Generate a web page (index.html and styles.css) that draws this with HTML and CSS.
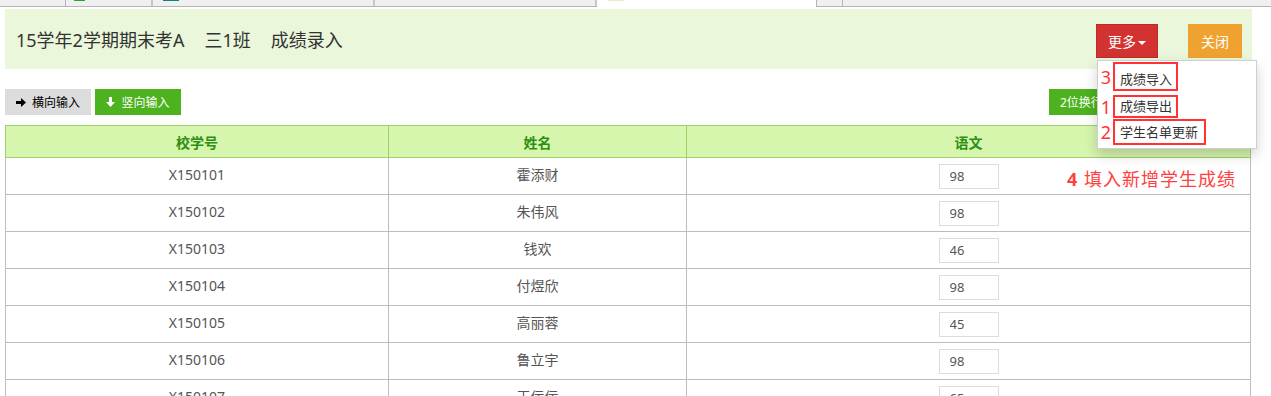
FILE: index.html
```html
<!DOCTYPE html>
<html lang="zh-CN">
<head>
    <meta charset="UTF-8">
    <title>成绩录入</title>
    <link rel="stylesheet" href="styles.css">
</head>
<body>
    <div class="tabs">
        <div class="tab tab-a"></div>
        <div class="tab tab-b"><i class="tab-icon icon-green"></i></div>
        <div class="tab tab-c"><i class="tab-icon icon-teal"></i></div>
        <div class="tab tab-d"></div>
        <div class="tab tab-e active"><i class="tab-icon icon-pale"></i></div>
        <div class="tab tab-f"></div>
    </div>

    <div class="page">
        <div class="header">
            <div class="title">15学年2学期期末考A<span class="gap">三1班</span><span class="gap">成绩录入</span></div>
            <div class="actions">
                <div class="more-wrap">
                    <button class="btn btn-more">更多<span class="caret"></span></button>
                    <ul class="menu">
                        <li class="menu-item"><span class="num">3</span><span class="mark mark-1">成绩导入</span></li>
                        <li class="menu-item item-2"><span class="num">1</span><span class="mark mark-2">成绩导出</span></li>
                        <li class="menu-item item-3"><span class="num">2</span><span class="mark mark-3">学生名单更新</span></li>
                    </ul>
                </div>
                <button class="btn btn-close">关闭</button>
            </div>
        </div>

        <div class="toolbar">
            <button class="tb-btn tb-gray">
                <svg width="10" height="9" viewBox="0 0 10 9"><path d="M0 3h5V0l5 4.5L5 9V6H0z" fill="#000"/></svg>
                横向输入
            </button>
            <button class="tb-btn tb-green">
                <svg width="9" height="10" viewBox="0 0 9 10"><path d="M3 0h3v5h3L4.5 10 0 5h3z" fill="#fff"/></svg>
                竖向输入
            </button>
            <div class="tb-right">
                <button class="tb-btn tb-green tb-wrap">2位换行</button>
                <button class="tb-btn tb-green tb-wrap tb-last">3位换行</button>
            </div>
        </div>

        <div class="table-wrap">
            <table class="scores">
                <thead>
                    <tr>
                        <th class="col-id">校学号</th>
                        <th class="col-name">姓名</th>
                        <th>语文</th>
                    </tr>
                </thead>
                <tbody>
                    <tr><td>X150101</td><td>霍添财</td><td><input class="score" value="98"></td></tr>
                    <tr><td>X150102</td><td>朱伟风</td><td><input class="score" value="98"></td></tr>
                    <tr><td>X150103</td><td>钱欢</td><td><input class="score" value="46"></td></tr>
                    <tr><td>X150104</td><td>付煜欣</td><td><input class="score" value="98"></td></tr>
                    <tr><td>X150105</td><td>高丽蓉</td><td><input class="score" value="45"></td></tr>
                    <tr><td>X150106</td><td>鲁立宇</td><td><input class="score" value="98"></td></tr>
                    <tr><td>X150107</td><td>王佞佞</td><td><input class="score" value="65"></td></tr>
                </tbody>
            </table>
            <div class="note"><b>4</b> 填入新增学生成绩</div>
        </div>
    </div>
</body>
</html>
```

FILE: styles.css
```css
html {
    overflow: hidden;
}
body {
    margin: 0;
    font-family: "Noto Sans", "Noto Sans CJK SC", sans-serif;
    color: #333;
    background: #fff;
}
.tabs {
    display: flex;
    height: 6px;
    background: #f0f0f0;
    border-bottom: 1px solid #b4b4b4;
}
.tab {
    height: 6px;
    border-right: 1px solid #b4b4b4;
    position: relative;
}
.tab-a { width: 65px; }
.tab-b { width: 85px; border-right: 2px solid #c8c8c8; }
.tab-c { width: 220px; border-right: 2px solid #c8c8c8; }
.tab-d { width: 220px; border-right: 2px solid #c8c8c8; }
.tab-e { width: 219px; }
.tab-f { width: 25px; }
.tab.active {
    background: #fff;
    height: 7px;
}
.tab-icon {
    display: block;
    height: 1px;
    width: 11px;
    margin-left: 8px;
}
.icon-green { background: #1aaa3a; }
.icon-teal { background: #108080; width: 16px; margin-left: 10px; }
.icon-pale { background: #e4f0c8; width: 16px; margin-left: 11px; }

.page {
    width: 1247px;
    margin: 0 5px;
    padding-top: 2px;
}
.header {
    height: 60px;
    background: #eaf7da;
    display: flex;
    align-items: center;
    justify-content: space-between;
    padding: 0 10px 0 11px;
}
.title {
    font-size: 18px;
    color: #333;
}
.gap {
    margin-left: 20px;
}
.actions {
    display: flex;
    gap: 30px;
    align-items: center;
    margin-top: 4px;
}
.btn {
    height: 34px;
    border: none;
    color: #fff;
    font-family: inherit;
    font-size: 14px;
    padding: 0;
}
.more-wrap {
    position: relative;
}
.btn-more {
    width: 62px;
    background: #d23330;
    border: 1px solid #b92c28;
}
.caret {
    display: inline-block;
    margin-left: 2px;
    vertical-align: middle;
    border-top: 4px solid #fff;
    border-left: 4px solid transparent;
    border-right: 4px solid transparent;
}
.btn-close {
    width: 54px;
    background: #efa22f;
}
.menu {
    position: absolute;
    top: 36px;
    left: 1px;
    width: 157px;
    margin: 0;
    padding: 1px 0 3px 1px;
    list-style: none;
    background: #fff;
    border: 1px solid #cfcfcf;
    box-shadow: 0 6px 12px rgba(0, 0, 0, 0.18);
    z-index: 5;
}
.menu-item {
    display: flex;
    align-items: center;
}
.item-2 { margin-top: 4px; }
.item-3 { margin-top: 1px; }
.num {
    width: 14px;
    text-align: center;
    color: #f33;
    font-size: 18px;
    line-height: 20px;
}
.mark {
    border: 2px solid #f33;
    font-size: 13px;
    line-height: 14px;
    color: #333;
}
.mark-1 { padding: 8px 4px 3px 5px; }
.mark-2 { padding: 2px 4px 3px 5px; }
.mark-3 { padding: 4px 6px 4px 5px; }

.toolbar {
    display: flex;
    gap: 4px;
    margin-top: 20px;
    height: 26px;
}
.tb-btn {
    width: 86px;
    height: 26px;
    border: none;
    font-family: inherit;
    font-size: 12px;
    display: flex;
    align-items: center;
    justify-content: center;
    gap: 6px;
    padding: 0;
}
.tb-gray {
    background: #dcdcdc;
    color: #000;
}
.tb-green {
    background: #4cb21d;
    color: #fff;
}
.tb-right {
    margin-left: auto;
    margin-right: 1px;
    width: 202px;
    display: flex;
    gap: 2px;
}
.tb-wrap {
    width: auto;
    padding: 0 11px;
    justify-content: flex-start;
}
.tb-last {
    flex: 1;
}

.table-wrap {
    position: relative;
    margin-top: 10px;
}
.scores {
    width: 1246px;
    border-collapse: collapse;
}
.scores thead tr {
    height: 32px;
}
.scores tbody tr {
    height: 37px;
}
.scores th {
    padding: 0;
    background: #d6f5ad;
    border: 1px solid #9fd26a;
    color: #2f8f14;
    font-size: 14px;
    font-weight: bold;
}
.col-id { width: 382px; }
.col-name { width: 297px; }
.scores td {
    padding: 0 0 2px;
    border: 1px solid #bdbdbd;
    color: #555;
    font-size: 14px;
    line-height: 18px;
    text-align: center;
}
.score {
    box-sizing: border-box;
    width: 60px;
    height: 25px;
    margin-bottom: -2px;
    border: 1px solid #dcdcdc;
    padding: 0 10px;
    font-family: inherit;
    font-size: 13px;
    color: #555;
    vertical-align: middle;
}
.note {
    position: absolute;
    top: 40px;
    left: 1062px;
    color: #ff4040;
    font-size: 18px;
    letter-spacing: 1px;
    white-space: nowrap;
}
.note b {
    font-weight: bold;
}
```
